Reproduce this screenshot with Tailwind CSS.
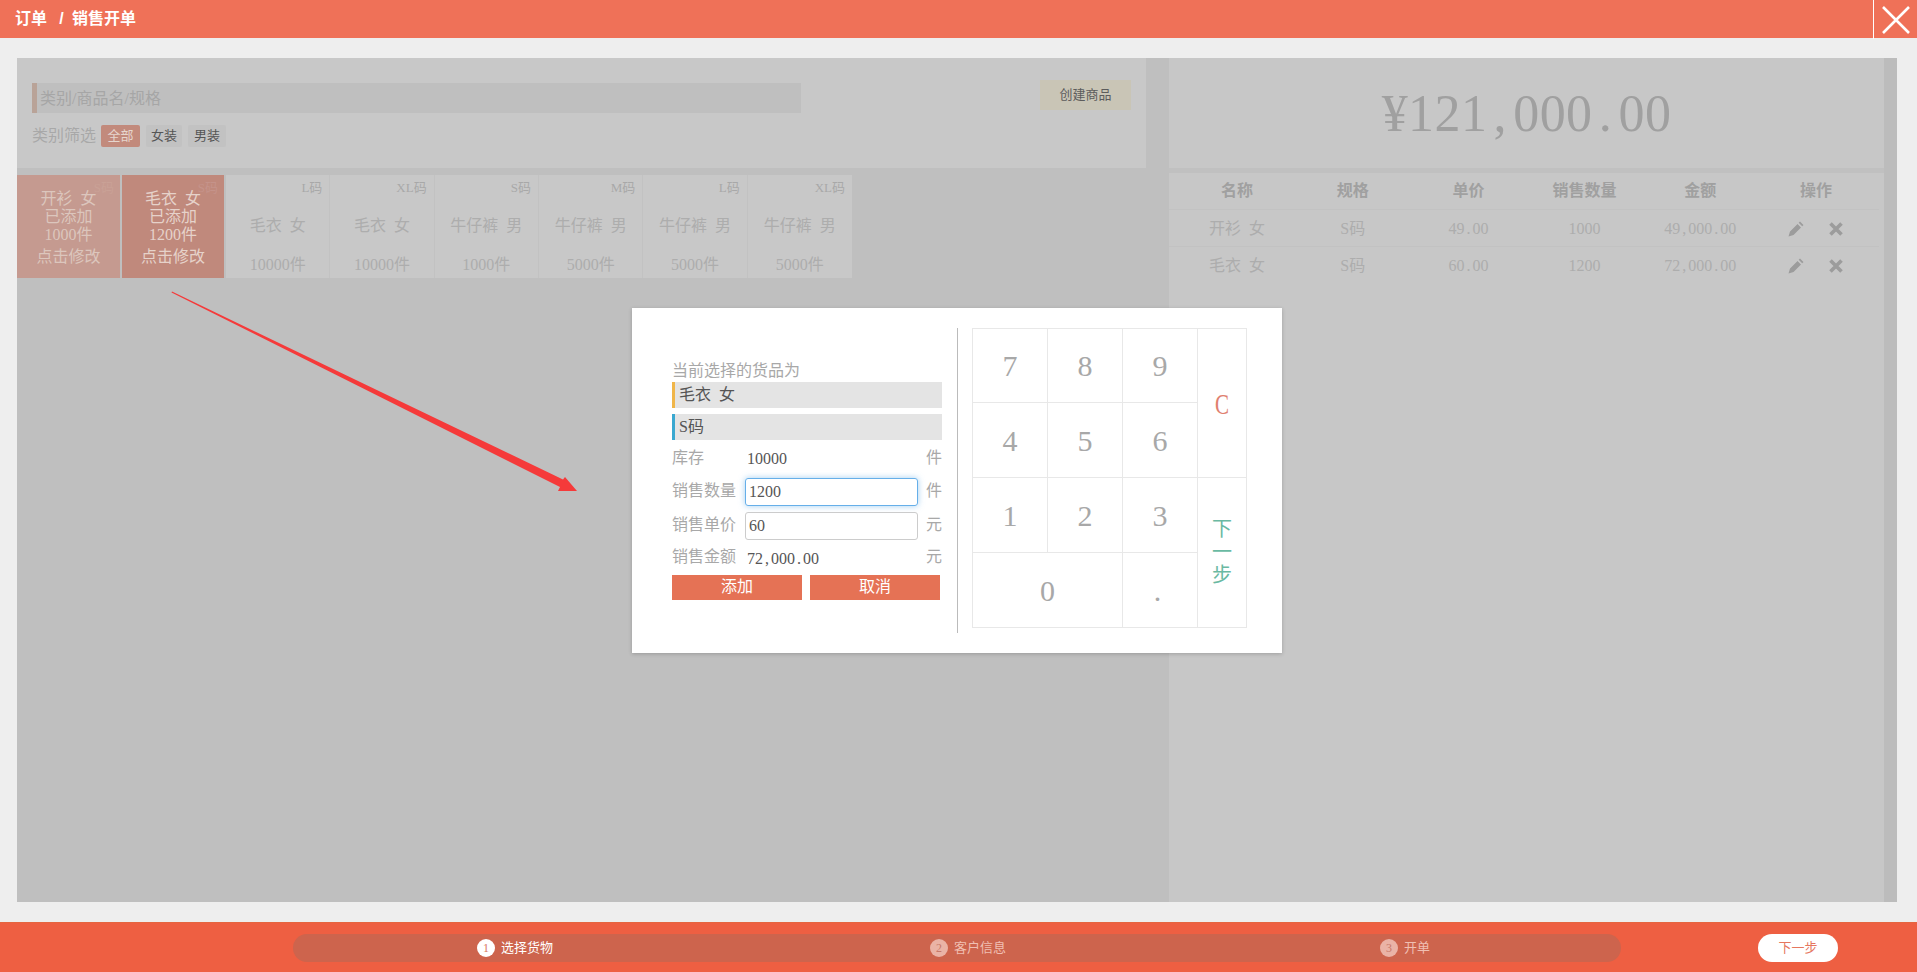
<!DOCTYPE html>
<html lang="zh-CN">
<head>
<meta charset="utf-8">
<title>订单 / 销售开单</title>
<script src="https://cdn.jsdelivr.net/npm/@tailwindcss/browser@4"></script>
</head>
<body class="relative w-[1917px] h-[972px] overflow-hidden flex flex-col bg-[#eeeeee] [font-family:'Liberation_Serif','Noto_Sans_CJK_SC',serif] [word-spacing:4px] text-[16px]">

<!-- Top bar -->
<header class="h-[38px] shrink-0 bg-[#ef7158] flex items-center justify-between pl-[15px] text-white">
  <div class="font-bold text-[16px] flex gap-[11px] leading-[36px]"><span>订单</span><span class="w-[7px] text-center [font-family:'Liberation_Sans',sans-serif]">/</span><span class="-ml-[4px]">销售开单</span></div>
  <div class="w-[44px] h-[39px] border-l border-white self-start flex items-center justify-center">
    <svg width="32" height="30" viewBox="0 0 32 30" fill="none" stroke="#fff" stroke-width="2.6"><path d="M3 2 L29 28 M29 2 L3 28"/></svg>
  </div>
</header>

<!-- Main -->
<main class="flex-1 pt-5 pb-5 pl-[17px] pr-5 flex">
  <div class="flex flex-1">
    <!-- Left -->
    <section class="w-[1152px] bg-[#bfbfbf]">
      <div class="w-[1129px] h-[110px] bg-[#c8c8c8] pt-[25px] px-[15px]">
        <div class="flex justify-between items-start">
          <input class="w-[769px] h-[30px] bg-[#bfbfbf] border-l-[5px] border-[#b9a398] pl-[3px] pt-[2px] text-[16px] outline-none placeholder:text-[#a6a6a6]" placeholder="类别/商品名/规格">
          <button class="w-[91px] h-[30px] -mt-[3px] bg-[#c9c5b6] text-[13px] text-[#5c5c5c]">创建商品</button>
        </div>
        <div class="flex items-center mt-3 h-[22px]">
          <span class="w-[69px] text-[#a8a8a8]">类别筛选</span>
          <span class="w-[39px] h-[22px] rounded-[2px] bg-[#c28a7c] text-[#e6d6ce] text-[13px] flex items-center justify-center">全部</span>
          <span class="w-[36px] h-[22px] ml-[6px] rounded-[2px] bg-[#c2c2c2] text-[#555] text-[13px] flex items-center justify-center">女装</span>
          <span class="w-[38px] h-[22px] ml-[6px] rounded-[2px] bg-[#c2c2c2] text-[#555] text-[13px] flex items-center justify-center">男装</span>
        </div>
      </div>

      <div class="flex mt-[7px] h-[103px]">
        <div class="relative w-[103px] bg-[#c59a90] text-[#dcc6bd] flex flex-col items-center pt-[15px] leading-[18px]">
          <span class="absolute top-[5px] right-[6px] text-[13px] leading-4 text-[#c9a196]">S码</span>
          <span>开衫 女</span><span>已添加</span><span>1000件</span><span class="mt-1">点击修改</span>
        </div>
        <div class="relative w-[102px] ml-[2px] bg-[#c0897c] text-[#e6d2ca] flex flex-col items-center pt-[15px] leading-[18px]">
          <span class="absolute top-[5px] right-[6px] text-[13px] leading-4 text-[#c5938a]">S码</span>
          <span>毛衣 女</span><span>已添加</span><span>1200件</span><span class="mt-1">点击修改</span>
        </div>

        <div class="ml-[2px] w-[104.33px] bg-[#c8c8c8] border-r border-[#c2c2c2] flex flex-col items-center pt-[5px] leading-[18px] text-[#adadad]">
          <span class="self-end pr-[7px] text-[13px] leading-4 text-[#a8a8a8]">L码</span><span class="mt-[21px]">毛衣 女</span><span class="mt-[21px]">10000件</span>
        </div>
        <div class="w-[104.33px] bg-[#c8c8c8] border-r border-[#c2c2c2] flex flex-col items-center pt-[5px] leading-[18px] text-[#adadad]">
          <span class="self-end pr-[7px] text-[13px] leading-4 text-[#a8a8a8]">XL码</span><span class="mt-[21px]">毛衣 女</span><span class="mt-[21px]">10000件</span>
        </div>
        <div class="w-[104.33px] bg-[#c8c8c8] border-r border-[#c2c2c2] flex flex-col items-center pt-[5px] leading-[18px] text-[#adadad]">
          <span class="self-end pr-[7px] text-[13px] leading-4 text-[#a8a8a8]">S码</span><span class="mt-[21px]">牛仔裤 男</span><span class="mt-[21px]">1000件</span>
        </div>
        <div class="w-[104.33px] bg-[#c8c8c8] border-r border-[#c2c2c2] flex flex-col items-center pt-[5px] leading-[18px] text-[#adadad]">
          <span class="self-end pr-[7px] text-[13px] leading-4 text-[#a8a8a8]">M码</span><span class="mt-[21px]">牛仔裤 男</span><span class="mt-[21px]">5000件</span>
        </div>
        <div class="w-[104.33px] bg-[#c8c8c8] border-r border-[#c2c2c2] flex flex-col items-center pt-[5px] leading-[18px] text-[#adadad]">
          <span class="self-end pr-[7px] text-[13px] leading-4 text-[#a8a8a8]">L码</span><span class="mt-[21px]">牛仔裤 男</span><span class="mt-[21px]">5000件</span>
        </div>
        <div class="w-[104.33px] bg-[#c8c8c8] flex flex-col items-center pt-[5px] leading-[18px] text-[#adadad]">
          <span class="self-end pr-[7px] text-[13px] leading-4 text-[#a8a8a8]">XL码</span><span class="mt-[21px]">牛仔裤 男</span><span class="mt-[21px]">5000件</span>
        </div>
      </div>
    </section>

    <!-- Right -->
    <section class="w-[715px] bg-[#c0c0c0] flex flex-col">
      <div class="h-[110px] bg-[#c7c7c7] flex items-center justify-center text-[52px] text-[#a0a0a0] tracking-[0.4px] pt-[1px]">
        <span>¥121<span class="inline-block w-[26px] text-center">,</span>000<span class="inline-block w-[26px] text-center">.</span>00</span>
      </div>
      <div class="flex-1 mt-[5px] bg-[#c7c7c7] pr-[5px]">
        <div class="grid grid-cols-6 h-[37px] pl-[10px] pr-[5px] items-center text-center border-b border-[#c2c2c2] text-[#a0a0a0] font-bold">
          <span>名称</span><span>规格</span><span>单价</span><span>销售数量</span><span>金额</span><span>操作</span>
        </div>
        <div class="grid grid-cols-6 h-[37px] pl-[10px] pr-[5px] pt-[1px] items-center text-center border-b border-[#c2c2c2] text-[#adadad]">
          <span>开衫 女</span><span>S码</span><span>49<span class="inline-block w-2 text-center">.</span>00</span><span>1000</span><span>49<span class="inline-block w-2 text-center">,</span>000<span class="inline-block w-2 text-center">.</span>00</span>
          <span class="flex items-center justify-center gap-[25px] pr-[2px]">
            <svg width="16" height="16" viewBox="0 0 16 16" fill="#9c9c9c"><path d="M0.5 15.5 L2 10.5 L9.5 3 L13 6.5 L5.5 14 Z M10.7 1.8 L12 0.5 L15.5 4 L14.2 5.3 Z"/></svg>
            <svg width="14" height="14" viewBox="0 0 14 14" fill="none" stroke="#9c9c9c" stroke-width="3.6"><path d="M1.5 1.5 L12.5 12.5 M12.5 1.5 L1.5 12.5"/></svg>
          </span>
        </div>
        <div class="grid grid-cols-6 h-[36px] pl-[10px] pr-[5px] pt-[1px] items-center text-center text-[#adadad]">
          <span>毛衣 女</span><span>S码</span><span>60<span class="inline-block w-2 text-center">.</span>00</span><span>1200</span><span>72<span class="inline-block w-2 text-center">,</span>000<span class="inline-block w-2 text-center">.</span>00</span>
          <span class="flex items-center justify-center gap-[25px] pr-[2px]">
            <svg width="16" height="16" viewBox="0 0 16 16" fill="#9c9c9c"><path d="M0.5 15.5 L2 10.5 L9.5 3 L13 6.5 L5.5 14 Z M10.7 1.8 L12 0.5 L15.5 4 L14.2 5.3 Z"/></svg>
            <svg width="14" height="14" viewBox="0 0 14 14" fill="none" stroke="#9c9c9c" stroke-width="3.6"><path d="M1.5 1.5 L12.5 12.5 M12.5 1.5 L1.5 12.5"/></svg>
          </span>
        </div>
      </div>
    </section>
    <div class="w-[13px] bg-[#bcbcbc]"></div>
  </div>
</main>

<!-- Bottom bar -->
<footer class="h-[50px] shrink-0 bg-[#ee5f42] border-t border-[#e5653f] flex items-center">
  <div class="ml-[293px] w-[1328px] h-[28px] rounded-[14px] bg-[#cd644d] flex items-center pl-[184px] text-[13px]">
    <div class="w-[453px] flex items-center gap-[6px] text-white">
      <span class="w-[18px] h-[18px] rounded-full bg-white text-[#d9775f] text-[12px] flex items-center justify-center">1</span>选择货物
    </div>
    <div class="w-[450px] flex items-center gap-[6px] text-[#f0bfb2]">
      <span class="w-[18px] h-[18px] rounded-full bg-[#eab3a6] text-[#c7796a] text-[12px] flex items-center justify-center">2</span>客户信息
    </div>
    <div class="flex items-center gap-[6px] text-[#f0bfb2]">
      <span class="w-[18px] h-[18px] rounded-full bg-[#eab3a6] text-[#c7796a] text-[12px] flex items-center justify-center">3</span>开单
    </div>
  </div>
  <button class="ml-[137px] w-[80px] h-[28px] rounded-[14px] bg-white text-[#e6775f] text-[13px]">下一步</button>
</footer>

<!-- Annotation arrow -->
<svg class="absolute left-0 top-0 pointer-events-none" width="1917" height="972" viewBox="0 0 1917 972">
  <polygon points="172,291.5 563,479.5 565,477 577,491 558,491 560,487 171.5,292.5" fill="#f53a3a"/>
</svg>

<!-- Modal -->
<div class="absolute left-[632px] top-[308px] w-[650px] h-[345px] bg-white shadow-[0_1px_4px_rgba(0,0,0,0.2)] pl-10 pt-5 flex items-start">
  <div class="w-[270px] mr-[2px] pt-8 text-[#a8a8a8]">
    <div class="h-[22px] leading-[22px]">当前选择的货品为</div>
    <div class="h-[26px] bg-[#e4e4e4] border-l-[3px] border-[#f0b64a] pl-[4px] leading-[26px] text-[#555]">毛衣 女</div>
    <div class="h-[26px] mt-[6px] bg-[#e4e4e4] border-l-[3px] border-[#3aa8d0] pl-[4px] leading-[26px] text-[#555]">S码</div>

    <div class="flex items-center h-[28px] mt-1">
      <span class="w-[75px] -mt-[1px]">库存</span><span class="flex-1 text-[#555] mt-[2px]">10000</span><span class="-mt-[1px]">件</span>
    </div>
    <div class="flex items-center h-[28px] mt-[6px]">
      <span class="w-[73px] -mt-[2px]">销售数量</span>
      <input value="1200" class="w-[173px] h-[28px] rounded-[3px] border border-[#66afe9] shadow-[0_0_6px_rgba(102,175,233,0.6)] pl-[3px] text-[#555] outline-none">
      <span class="ml-auto -mt-[2px]">件</span>
    </div>
    <div class="flex items-center h-[28px] mt-[6px]">
      <span class="w-[73px] -mt-[2px]">销售单价</span>
      <input value="60" class="w-[173px] h-[28px] rounded-[3px] border border-[#cccccc] pl-[3px] text-[#555] outline-none">
      <span class="ml-auto -mt-[2px]">元</span>
    </div>
    <div class="flex items-center h-[28px] mt-1">
      <span class="w-[75px] -mt-[2px]">销售金额</span><span class="flex-1 text-[#555] mt-[1px]">72<span class="inline-block w-2 text-center">,</span>000<span class="inline-block w-2 text-center">.</span>00</span><span class="-mt-[2px]">元</span>
    </div>
    <div class="flex gap-2 mt-[3px] w-[268px]">
      <button class="w-[130px] h-[25px] bg-[#e57255] text-white text-[16px] leading-[24px] flex justify-center">添加</button>
      <button class="w-[130px] h-[25px] bg-[#e57255] text-white text-[16px] leading-[24px] flex justify-center">取消</button>
    </div>
  </div>

  <div class="w-px h-[305px] bg-[#bbbbbb] ml-[13px]"></div>

  <div class="ml-[14px] w-[275px] h-[300px] border-t border-l border-[#e8e8e8] grid grid-cols-[75px_75px_75px_49px] grid-rows-[74px_75px_75px_75px] text-[30px] text-[#a8a8a8]">
    <div class="border-r border-b border-[#e8e8e8] flex items-center justify-center">7</div>
    <div class="border-r border-b border-[#e8e8e8] flex items-center justify-center">8</div>
    <div class="border-r border-b border-[#e8e8e8] flex items-center justify-center">9</div>
    <div class="row-span-2 border-r border-b border-[#e8e8e8] flex items-center justify-center text-[#e0806f]"><span class="scale-x-70">C</span></div>
    <div class="border-r border-b border-[#e8e8e8] flex items-center justify-center">4</div>
    <div class="border-r border-b border-[#e8e8e8] flex items-center justify-center">5</div>
    <div class="border-r border-b border-[#e8e8e8] flex items-center justify-center">6</div>
    <div class="border-r border-b border-[#e8e8e8] flex items-center justify-center">1</div>
    <div class="border-r border-b border-[#e8e8e8] flex items-center justify-center">2</div>
    <div class="border-r border-b border-[#e8e8e8] flex items-center justify-center">3</div>
    <div class="row-span-2 border-r border-b border-[#e8e8e8] flex items-center justify-center">
      <span class="w-5 text-[20px] leading-[23px] text-[#6ab9a2]">下一步</span>
    </div>
    <div class="col-span-2 border-r border-b border-[#e8e8e8] flex items-center justify-center">0</div>
    <div class="border-r border-b border-[#e8e8e8] flex items-center justify-center pr-[5px]">.</div>
  </div>
</div>
</body>
</html>
